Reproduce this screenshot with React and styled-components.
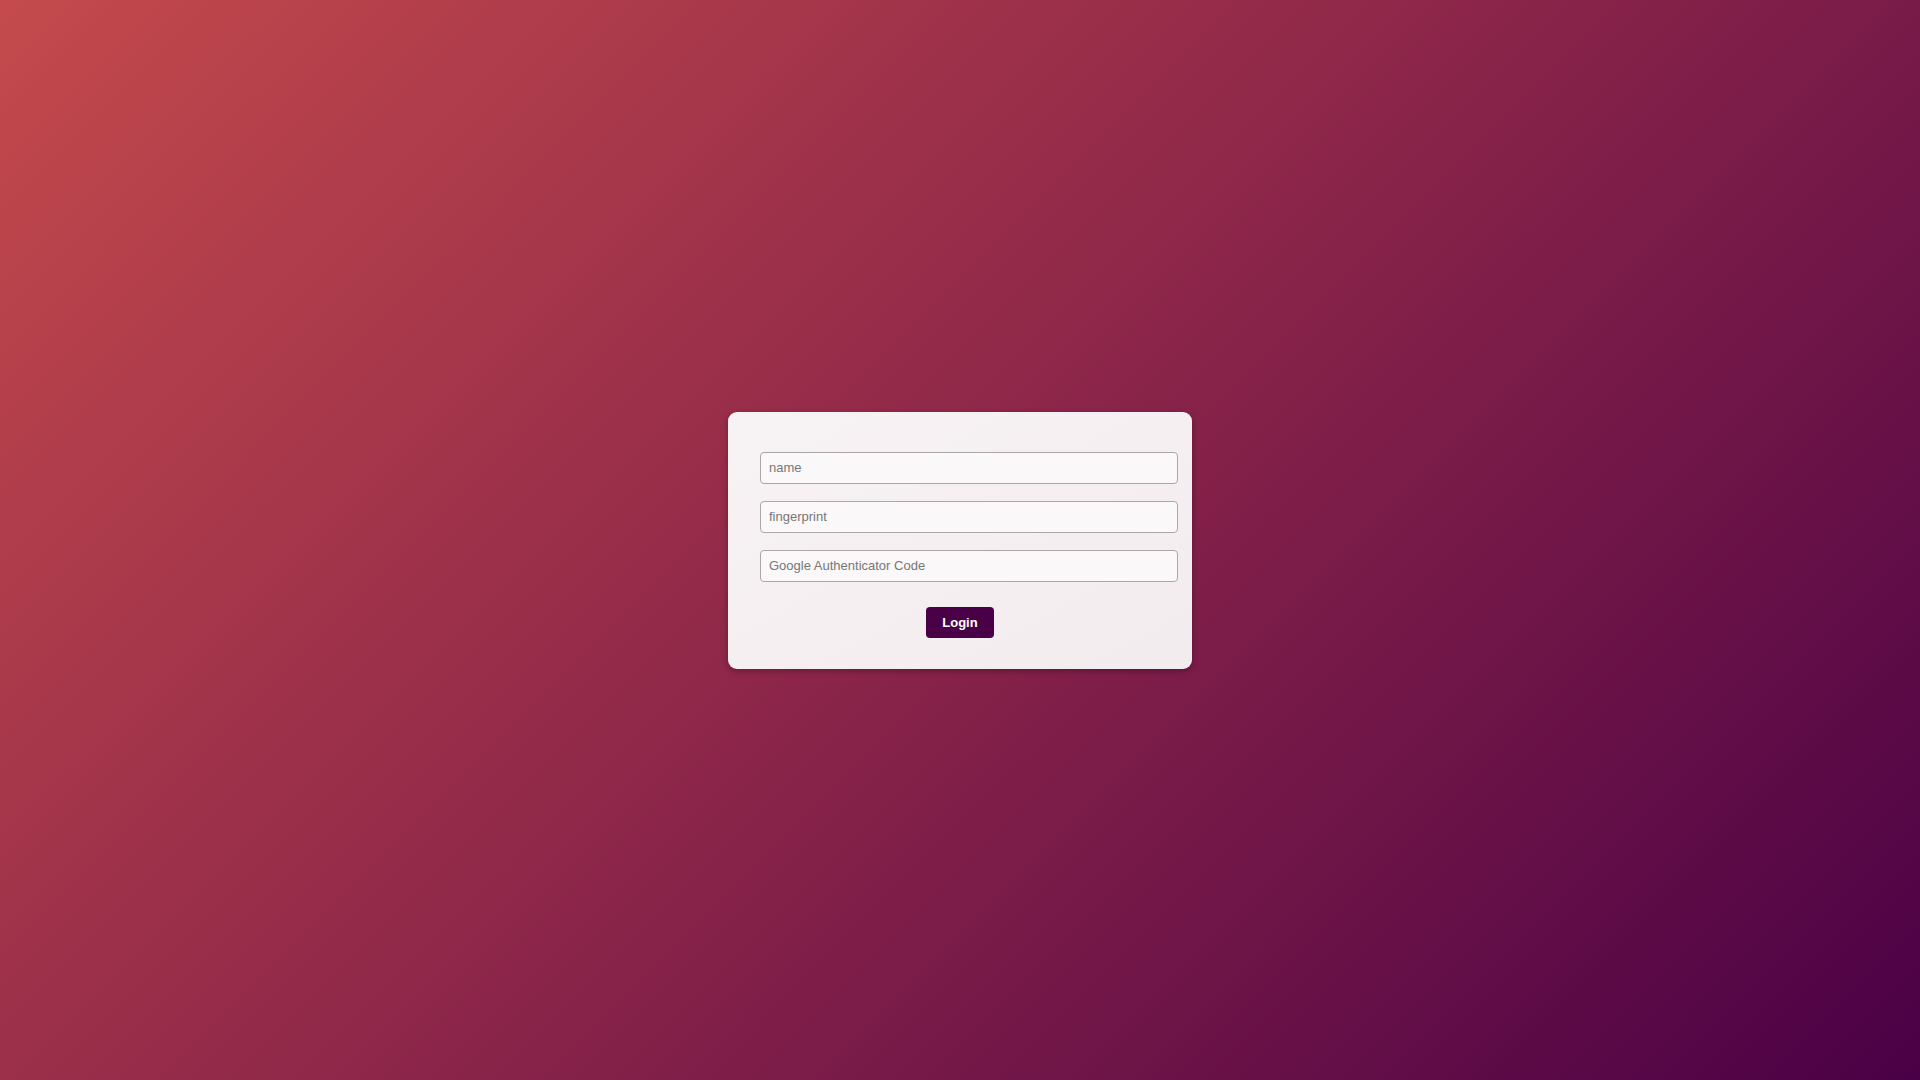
import React from "react";
import styled, { createGlobalStyle } from "styled-components";

const GlobalStyle = createGlobalStyle`
  html, body {
    margin: 0;
    padding: 0;
    height: 100%;
  }
  body {
    font-family: "Liberation Sans", Arial, sans-serif;
  }
  #root {
    height: 100%;
  }
`;

const App = () => {
  return (
    <>
      <GlobalStyle />
      <Page>
        <LoginCard>
          <LoginInput type="text" placeholder="name" />
          <LoginInput type="text" placeholder="fingerprint" />
          <LoginInput type="text" placeholder="Google Authenticator Code" />
          <ButtonRow>
            <LoginButton>Login</LoginButton>
          </ButtonRow>
        </LoginCard>
      </Page>
    </>
  );
};

const Page = styled.div`
  height: 100vh;
  display: flex;
  align-items: center;
  justify-content: center;
  background: linear-gradient(135deg, #c44a4c 0%, #8b2549 50%, #4a0046 100%);
`;

const LoginCard = styled.div`
  width: 400px;
  padding: 40px 32px 31px;
  display: flex;
  flex-direction: column;
  background: linear-gradient(to bottom right, #f7f2f4, #f3ecef);
  border-radius: 9px;
  box-shadow: 0 2px 6px rgba(0, 0, 0, 0.3);
`;

const LoginInput = styled.input`
  box-sizing: content-box;
  width: 100%;
  height: 30px;
  padding: 0 8px;
  margin: 0 0 17px;
  border: 1px solid #aaa6a8;
  border-radius: 4px;
  background: #faf8f9;
  font-family: "Liberation Sans", Arial, sans-serif;
  font-size: 13px;
  color: #333;
  outline: none;

  &:last-of-type {
    margin-bottom: 25px;
  }

  &::placeholder {
    color: #777;
  }
`;

const ButtonRow = styled.div`
  display: flex;
  justify-content: center;
`;

const LoginButton = styled.button`
  width: 68px;
  height: 31px;
  border: none;
  border-radius: 4px;
  background: #4a0046;
  color: #fff;
  font-family: "Liberation Sans", Arial, sans-serif;
  font-size: 13px;
  font-weight: 700;
  cursor: pointer;
`;

export default App;
